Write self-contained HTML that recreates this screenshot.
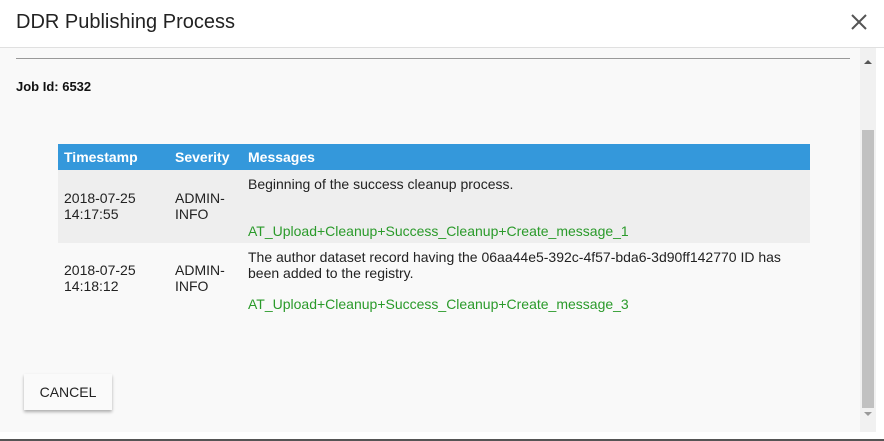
<!DOCTYPE html>
<html><head><style>
*{margin:0;padding:0;box-sizing:border-box}
body{width:884px;height:441px;background:#fff;font-family:"Liberation Sans",Arial,sans-serif;position:relative;overflow:hidden}
.title{position:absolute;left:16px;top:11px;font-size:20px;color:#222}
.x{position:absolute;left:850px;top:13px}
.hdrline{position:absolute;left:0;top:47px;width:884px;height:1px;background:#e0e0e0}
.body{position:absolute;left:0;top:48px;width:860px;height:384px;background:#f9f9f9}
.rule{position:absolute;left:16px;top:10px;width:834px;height:1px;background:#999}
.job{position:absolute;left:16px;top:31px;font-size:13px;font-weight:bold;color:#111}
table{position:absolute;left:58px;top:96px;width:752px;border-collapse:collapse;font-size:14px;line-height:16px;color:#222}
th{background:#3498db;color:#fff;text-align:left;height:26px;padding:0 6px;font-size:14px}
td{vertical-align:top;padding:0 6px}
tr.g td{background:#eee}
.g1{color:#2a9a2a}
.btn{position:absolute;left:24px;top:326px;width:88px;height:36px;background:#fafafa;box-shadow:0 2px 3px rgba(0,0,0,.3);font-size:14px;text-align:center;line-height:36px;color:#222}
.sb{position:absolute;left:860px;top:48px;width:16px;height:384px;background:#f1f1f1}
.thumb{position:absolute;left:2px;top:82px;width:12px;height:278px;background:#c1c1c1}
.bot{position:absolute;left:0;top:439px;width:884px;height:2px;background:#555}
</style></head><body>
<div class="title">DDR Publishing Process</div>
<svg class="x" width="18" height="18" viewBox="0 0 18 18"><path d="M2 2L16 16M16 2L2 16" stroke="#555" stroke-width="2"/></svg>
<div class="hdrline"></div>
<div class="body">
<div class="rule"></div>
<div class="job">Job Id: 6532</div>
<table>
<tr><th style="width:111px">Timestamp</th><th style="width:73px">Severity</th><th>Messages</th></tr>
<tr class="g"><td style="padding-top:20px;height:73px">2018-07-25<br>14:17:55</td><td style="padding-top:20px">ADMIN-<br>INFO</td><td style="padding-top:6px">Beginning of the success cleanup process.<br><div class="g1" style="margin-top:31px">AT_Upload+Cleanup+Success_Cleanup+Create_message_1</div></td></tr>
<tr><td style="padding-top:19px;height:78px">2018-07-25<br>14:18:12</td><td style="padding-top:19px">ADMIN-<br>INFO</td><td style="padding-top:6px">The author dataset record having the 06aa44e5-392c-4f57-bda6-3d90ff142770 ID has been added to the registry.<br><div class="g1" style="margin-top:15px">AT_Upload+Cleanup+Success_Cleanup+Create_message_3</div></td></tr>
</table>
<div class="btn">CANCEL</div>
</div>
<div class="sb"><div style="position:absolute;left:4px;top:12px;border:4px solid transparent;border-bottom:4px solid #555;border-top:0;width:0"></div><div class="thumb"></div><div style="position:absolute;left:4px;top:364px;border:4px solid transparent;border-top:4px solid #999;border-bottom:0;width:0"></div></div>
<div class="bot"></div>
</body></html>
